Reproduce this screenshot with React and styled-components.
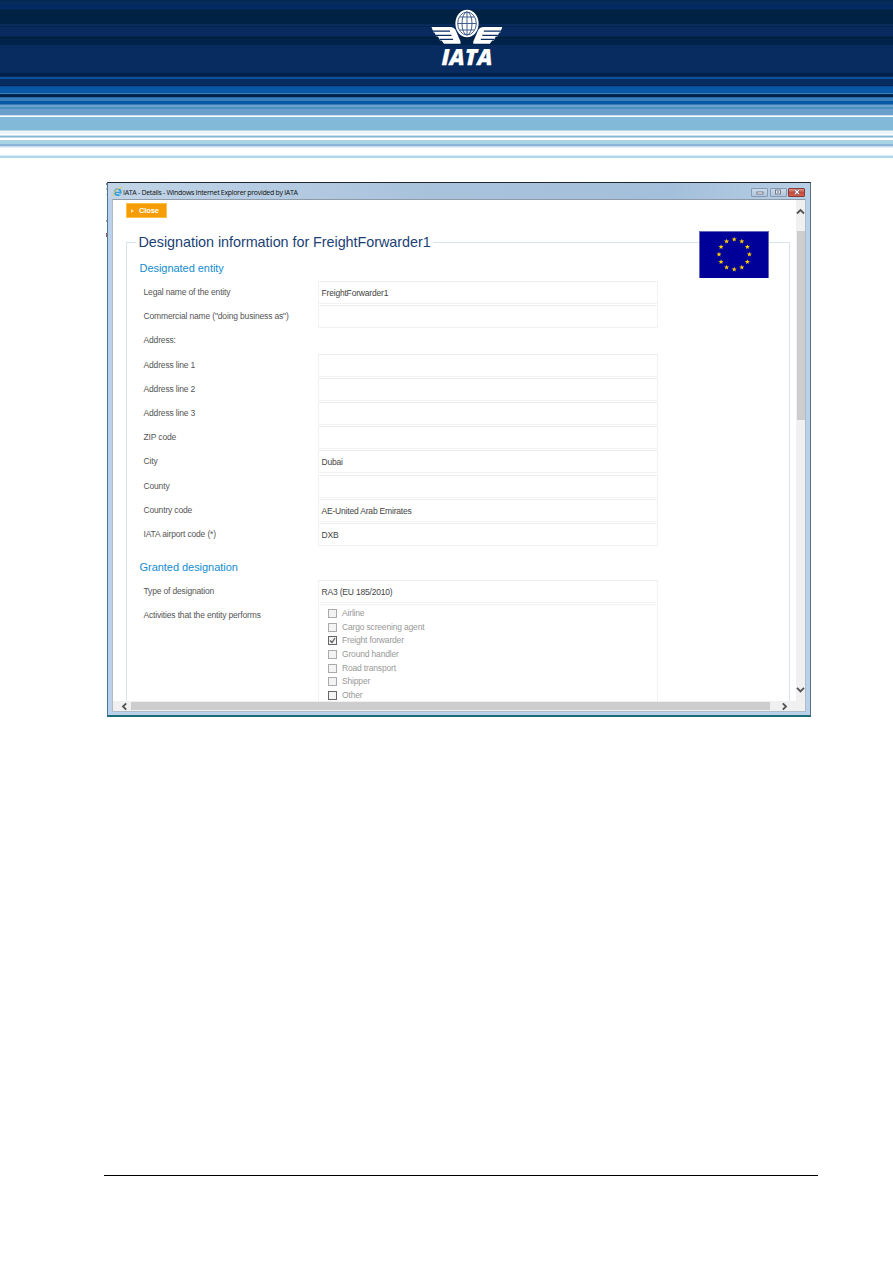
import React from 'react';
import styled, { createGlobalStyle } from 'styled-components';

const Global = createGlobalStyle`
  *{box-sizing:border-box}
  body{margin:0;background:#fff;font-family:"Liberation Sans",Arial,sans-serif;}
`;

const bands = [
  [1,'#05284f'],[5,'#062a5c'],[9,'#042a63'],[10,'#04264f'],[24,'#002244'],[26,'#082a5c'],[27,'#03234c'],
  [36,'#082a5e'],[37,'#04264f'],[39,'#00203f'],[40,'#03264d'],[45,'#002248'],[73,'#082b60'],[76,'#002147'],[77,'#0a2b5c'],
  [79,'#0c509b'],[85,'#082b60'],[86,'#06244f'],[87,'#0a4a92'],[93,'#0858a5'],[94,'#3b80b0'],[95,'#08285c'],[97,'#00234a'],
  [98,'#2c68a0'],[101,'#3b80ba'],[104,'#0858a5'],[105,'#3a7ab8'],[106,'#6ba0cc'],[107,'#6ba5cf'],[109,'#4a8fbe'],
  [115,'#6b9fcc'],[116,'#c8dff0'],[117,'#f4fafa'],[130,'#82b8d8'],[131,'#b8d8e8'],[134,'#edf4fa'],[135,'#ffffff'],
  [136,'#c8dff0'],[137,'#82b8d8'],[138,'#c0d8e8'],[140,'#ffffff'],[144,'#a8d4e6'],[146,'#8ab4d8'],[147,'#c5daf0'],
  [148,'#e8f0fa'],[155,'#ffffff'],[156,'#d8eff5'],[158,'#b0d8ea'],
];
const stripes = bands.map(([end, color], i) => `${color} ${i ? bands[i - 1][0] : 0}px ${end}px`).join(', ');

const Page = styled.div`
  width:893px;height:1263px;overflow:hidden;display:flex;flex-direction:column;background:#fff;
`;
const Masthead = styled.header`
  height:158px;flex:none;background:linear-gradient(to bottom, ${stripes});
  padding:9px 0 0 430px;
  svg{display:block}
`;
const Window = styled.section`
  margin:24px 0 0 107px;width:704px;height:535px;flex:none;display:flex;flex-direction:column;position:relative;
  background:#b9d1ea;border:solid;border-width:1px 1px 2px 1px;border-color:#20242c #55717f #186a78 #4f7793;
  padding:0 4px 3px;
`;
const BehindEdge = styled.i`
  position:absolute;top:0;left:-2px;width:1px;height:56px;
  background:linear-gradient(#777 0 2px,#fff 2px 5px,#bbb 5px 7px,#fff 7px 11px,#ccc 11px 12px,#fff 12px 37px,#a99 37px 39px,#fff 39px 50px,#a55 50px 54px,#fff 54px);
`;
const TitleBar = styled.div`
  height:16px;flex:none;margin:0 -4px;padding:2px 5px 0 5px;display:flex;align-items:center;
  background:linear-gradient(90deg,#c2d5e8,#a9c2dc 45%,#a4bfdb 80%,#b7cfe6);
  svg{flex:none}
`;
const WindowTitle = styled.div`
  flex:1;font:7px/15px "Open Sans","Noto Sans",sans-serif;color:#111;white-space:nowrap;letter-spacing:-.31px;
`;
const Buttons = styled.div`display:flex;gap:1.5px;height:9px;`;
const WinButton = styled.div`
  width:17px;height:9px;border:1px solid ${p => (p.$close ? '#8a3a36' : '#8799ae')};border-radius:1px;
  background:${p => (p.$close ? 'linear-gradient(#dc9a8e,#c4493b 50%,#cf6350)' : 'linear-gradient(#cbdbeb,#b0c5dc)')};
  display:flex;align-items:center;justify-content:center;
`;
const Client = styled.div`
  flex:1;min-height:0;display:flex;flex-direction:column;background:#fff;
  border:1px solid #b2bac4;border-top-color:#8e9aa6;
`;
const Upper = styled.div`flex:1;min-height:0;display:flex;`;
const Content = styled.main`flex:1;overflow:hidden;padding:3px 7px 0 13px;`;
const CloseButton = styled.button`
  display:flex;align-items:center;gap:5px;width:41px;height:15px;border:1px solid #fbc04a;background:#f69c05;
  color:#fff;font:bold 7.5px/12px "Liberation Sans",sans-serif;padding:0 0 0 4px;letter-spacing:-.1px;
`;
const Card = styled.fieldset`
  margin:15px 0 0;padding:0 0 0 16px;border:1px solid #d8e3ec;height:500px;min-width:0;width:664px;position:relative;
`;
const Legend = styled.legend`
  margin-left:-7px;padding:0 2px 0 2.5px;font-size:14.4px;line-height:19px;height:18px;color:#1c3f76;white-space:nowrap;
  letter-spacing:-.05px;
`;
const Flag = styled.div`
  position:absolute;right:20px;top:-20px;width:70px;height:47px;
  svg{display:block}
`;
const SectionTitle = styled.h2`
  margin:${p => p.$top}px 0 4px -3.5px;height:17px;font-size:11px;line-height:17px;font-weight:400;color:#118dd0;
  letter-spacing:-.04px;
`;
const Row = styled.div`display:flex;height:24.2px;`;
const Label = styled.div`
  width:175px;flex:none;padding-left:.5px;font-size:8.5px;line-height:23.5px;color:#555;white-space:nowrap;letter-spacing:-.16px;
`;
const Field = styled.div`
  width:340px;height:23px;border:1px solid #f2f2f2;border-top-color:#ededed;padding-left:2.5px;
  font-size:8.5px;line-height:22px;color:#444;white-space:nowrap;letter-spacing:-.19px;
`;
const CheckList = styled.div`
  width:340px;height:120px;border:1px solid #f2f2f2;padding:1.6px 0 0 9px;
`;
const CheckItem = styled.div`
  display:flex;align-items:center;gap:5px;height:13.65px;font-size:8.5px;line-height:11px;color:#999;white-space:nowrap;
  letter-spacing:-.17px;
`;
const Box = styled.span`
  width:9px;height:9px;flex:none;border:1px solid ${p => (p.$dark ? '#666' : '#aaa')};background:#f3f3f3;display:flex;
`;
const VScroll = styled.div`
  width:9px;flex:none;background:#f0f0f0;display:flex;flex-direction:column;align-items:center;padding:7px 0;
`;
const VThumb = styled.div`width:8px;height:189px;background:#cdcdcd;margin:15px 0 auto;`;
const HScroll = styled.div`
  height:10px;flex:none;background:#f0f0f0;display:flex;align-items:center;padding:0 16px 0 7px;
`;
const HThumb = styled.div`width:639px;height:8px;background:#cdcdcd;margin:0 auto 0 2px;`;
const FooterRule = styled.div`width:714px;height:1px;margin:458px 0 0 104px;background:#000;flex:none;`;

const Logo = () => (
  <svg width="74" height="70" viewBox="0 0 74 70">
    <g fill="#fff">
      <path d="M1.500 18H20Q24.500 18 26 22L30.500 32.500V34.800H14L11.500 31.500H10L8 27.500H6.500L4.500 23.500H3.500Z" />
      <path d="M72.300 18H53.800Q49.300 18 47.800 22L43.300 32.500V34.800H59.800L62.300 31.500H63.800L65.800 27.500H67.300L69.300 23.500H70.300Z" />
      <ellipse cx="37" cy="14.500" rx="11.600" ry="13.800" />
    </g>
    <g fill="none" stroke="#0a2c60" strokeWidth="1.300">
      <path d="M2 22.200H20M6 26.300H21.500M9.500 30.300H23M71.800 22.200H53.800M67.800 26.300H52.300M64.300 30.300H50.800" />
    </g>
    <g fill="none" stroke="#3a5688" strokeWidth=".95">
      <ellipse cx="37" cy="14.500" rx="5" ry="11.500" /><ellipse cx="37" cy="14.500" rx="9.300" ry="11.500" />
      <path d="M37 3V26M27.700 14.500H46.300M30 8H44M30 21H44" />
    </g>
    <text x="11.500" y="55.500" fill="#fff" stroke="#fff" strokeWidth=".25" fontFamily="Open Sans, sans-serif" fontSize="23" fontWeight="800" fontStyle="italic" textLength="51" lengthAdjust="spacingAndGlyphs">IATA</text>
  </svg>
);

const starPoints = (cx, cy) =>
  Array.from({ length: 10 }, (_, i) => {
    const r = i % 2 ? 1.1 : 2.7, a = (i * Math.PI) / 5;
    return `${cx + r * Math.sin(a)},${cy - r * Math.cos(a)}`;
  }).join(' ');

const EuFlag = () => (
  <svg width="70" height="47" viewBox="0 0 70 47">
    <rect width="70" height="47" fill="#6668b8" /><rect x="1" y="1" width="68" height="46" fill="#000098" />
    {Array.from({ length: 12 }, (_, i) => {
      const a = (i * Math.PI) / 6;
      return <polygon key={i} fill="#ffcc00" points={starPoints(35.2 + 15.2 * Math.sin(a), 23.4 - 15 * Math.cos(a))} />;
    })}
  </svg>
);

const IeIcon = () => (
  <svg width="10" height="10" viewBox="0 0 10 10">
    <circle cx="4.700" cy="5.200" r="3" fill="none" stroke="#2f9fdc" strokeWidth="1.700" />
    <path d="M2 5.400H8" stroke="#2f9fdc" strokeWidth="1.200" />
    <path d="M6 7.200H9" stroke="#bcd0e5" strokeWidth="1.200" />
    <path d="M.9 9.200C-.9 6 5.500 -.6 9.200 1.200" fill="none" stroke="#e8c860" strokeWidth="1.100" />
  </svg>
);

const chevrons = { up: 'M1 6.500L4.500 3L8 6.500', down: 'M1 2.800L4.500 6.300L8 2.800', left: 'M6.200 1.300L3 4.500L6.200 7.700', right: 'M2.800 1.300L6 4.500L2.800 7.700' };
const Chevron = ({ dir }) => (
  <svg width="9" height="9" viewBox="0 0 9 9"><path d={chevrons[dir]} fill="none" stroke="#555" strokeWidth="1.900" /></svg>
);

const entityRows = [
  ['Legal name of the entity', 'FreightForwarder1'],
  ['Commercial name ("doing business as")', ''],
  ['Address:', null],
  ['Address line 1', ''],
  ['Address line 2', ''],
  ['Address line 3', ''],
  ['ZIP code', ''],
  ['City', 'Dubai'],
  ['County', ''],
  ['Country code', 'AE-United Arab Emirates'],
  ['IATA airport code (*)', 'DXB'],
];
const activities = ['Airline', 'Cargo screening agent', 'Freight forwarder', 'Ground handler', 'Road transport', 'Shipper', 'Other'];

export default function App() {
  return (
    <Page>
      <Global />
      <Masthead><Logo /></Masthead>
      <Window>
        <BehindEdge />
        <TitleBar>
          <IeIcon />
          <WindowTitle>IATA - Details - Windows Internet Explorer provided by IATA</WindowTitle>
          <Buttons>
            <WinButton><svg width="8" height="5"><rect x="1" y="2" width="6" height="2" fill="#fff" stroke="#556" strokeWidth=".7" /></svg></WinButton>
            <WinButton><svg width="8" height="6"><rect x="1.500" y="1" width="5" height="4" fill="#dfe8f2" stroke="#667" strokeWidth=".8" /><path d="M4 2V4" stroke="#667" /></svg></WinButton>
            <WinButton $close><svg width="8" height="6"><path d="M2 1L6 5M6 1L2 5" stroke="#634" strokeWidth="2.400" /><path d="M2 1L6 5M6 1L2 5" stroke="#fff" strokeWidth="1.300" /></svg></WinButton>
          </Buttons>
        </TitleBar>
        <Client>
          <Upper>
            <Content>
              <CloseButton><svg width="3" height="4"><path d="M0 0L3 2L0 4Z" fill="#ffe2a6" /></svg>Close</CloseButton>
              <Card>
                <Legend>Designation information for FreightForwarder1</Legend>
                <Flag><EuFlag /></Flag>
                <SectionTitle $top={9}>Designated entity</SectionTitle>
                {entityRows.map(([label, value]) => (
                  <Row key={label}>
                    <Label>{label}</Label>
                    {value !== null && <Field>{value}</Field>}
                  </Row>
                ))}
                <SectionTitle $top={12}>Granted designation</SectionTitle>
                <Row><Label>Type of designation</Label><Field>RA3 (EU 185/2010)</Field></Row>
                <Row>
                  <Label>Activities that the entity performs</Label>
                  <CheckList>
                    {activities.map(name => (
                      <CheckItem key={name}>
                        <Box $dark={name === 'Freight forwarder' || name === 'Other'}>
                          {name === 'Freight forwarder' && <svg width="7" height="7"><path d="M1 3.500L3 5.500L6 1" fill="none" stroke="#555" strokeWidth="1.200" /></svg>}
                        </Box>
                        {name}
                      </CheckItem>
                    ))}
                  </CheckList>
                </Row>
              </Card>
            </Content>
            <VScroll><Chevron dir="up" /><VThumb /><Chevron dir="down" /></VScroll>
          </Upper>
          <HScroll><Chevron dir="left" /><HThumb /><Chevron dir="right" /></HScroll>
        </Client>
      </Window>
      <FooterRule />
    </Page>
  );
}
